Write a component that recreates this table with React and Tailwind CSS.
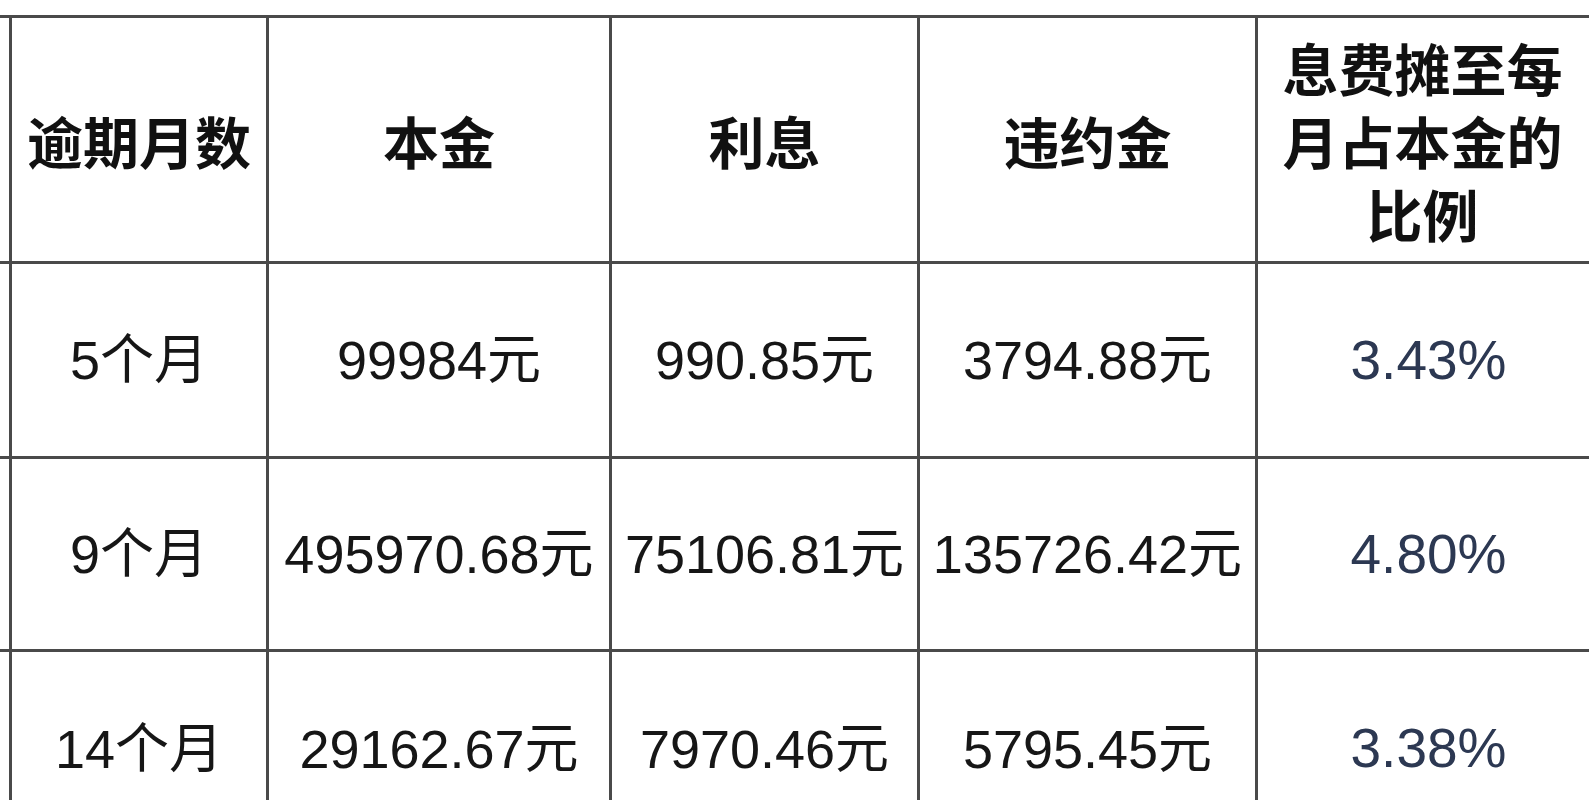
import React from "react";

const rows = [
  ["5个月", "99984元", "990.85元", "3794.88元", "3.43%"],
  ["9个月", "495970.68元", "75106.81元", "135726.42元", "4.80%"],
  ["14个月", "29162.67元", "7970.46元", "5795.45元", "3.38%"],
];

const headFont = { fontFamily: '"Noto Sans CJK SC", sans-serif' };
const bodyFont = { fontFamily: '"Liberation Sans", "Noto Sans CJK SC", sans-serif' };

export default function App() {
  return (
    <div className="w-[1589px] h-[800px] overflow-hidden bg-white pt-[15px]">
      <div
        className="grid bg-[#4a4a4a] gap-[3px] pt-[3px] grid-cols-[9px_254px_340px_305px_335px_1fr] grid-rows-[243px_192px_190px_193px]"
      >
        {/* header */}
        <div className="bg-white" />
        {["逾期月数", "本金", "利息", "违约金"].map((h) => (
          <div
            key={h}
            style={headFont}
            className="bg-white flex items-center justify-center text-[56px] font-bold text-[#111] leading-none"
          >
            {h}
          </div>
        ))}
        <div
          style={headFont}
          className="bg-white flex items-center justify-center text-center text-[56px] font-bold text-[#111] leading-[73px] pr-[2px]"
        >
          <div>
            息费摊至每
            <br />
            月占本金的
            <br />
            比例
          </div>
        </div>

        {rows.map((r, i) => (
          <React.Fragment key={i}>
            <div className="bg-white" />
            {r.slice(0, 4).map((c, j) => (
              <div
                key={j}
                style={bodyFont}
                className="bg-white flex items-center justify-center text-[54px] text-[#161616] leading-none whitespace-nowrap"
              >
                {c}
              </div>
            ))}
            <div
              style={bodyFont}
              className="bg-white flex items-center justify-center text-[55px] text-[#2c3852] leading-none pl-[10px]"
            >
              {r[4]}
            </div>
          </React.Fragment>
        ))}
      </div>
    </div>
  );
}
